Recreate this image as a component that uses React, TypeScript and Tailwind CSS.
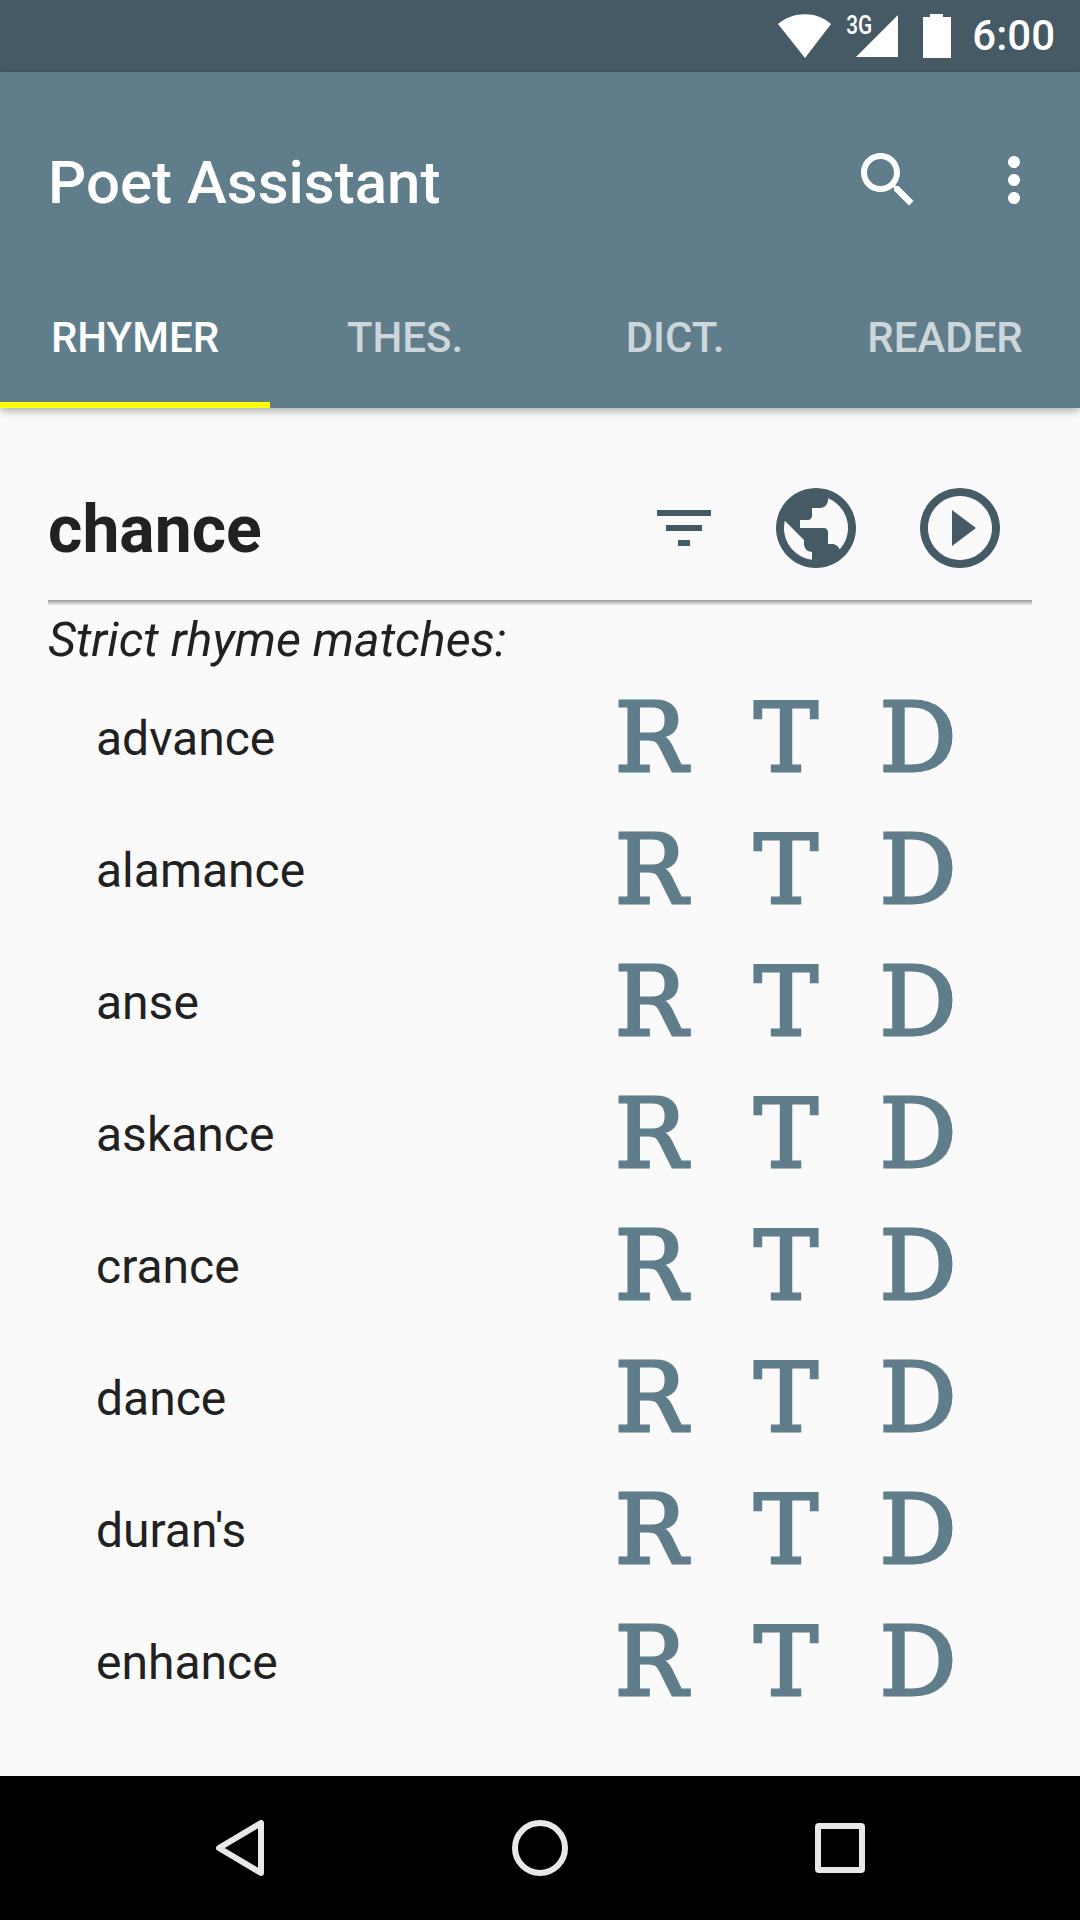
import React from 'react';

const WORDS = ['advance', 'alamance', 'anse', 'askance', 'crance', 'dance', "duran's", 'enhance'];
const TABS = ['RHYMER', 'THES.', 'DICT.', 'READER'];

const StatusBar: React.FC = () => (
  <div className="h-[72px] bg-[#455a64] flex items-center justify-end pr-[25px] text-white shrink-0">
    <svg width="54" height="44" viewBox="0 0 54 44" className="mt-[-1px]" fill="white">
      <path d="M27 44 L0 10 C15 -3 39 -3 53 10 Z" />
    </svg>
    <div className="relative w-[44px] h-[44px] ml-[23px] mt-[-1px]">
      <svg width="44" height="44" viewBox="0 0 44 44" fill="white" className="absolute right-0 top-0">
        <path d="M43 1 V43 H1 Z" />
      </svg>
      <span className="absolute left-[-12px] top-[-2px] text-[26px] leading-[26px] font-medium scale-x-[0.8]">3G</span>
    </div>
    <svg width="30" height="44" viewBox="0 0 30 44" fill="white" className="ml-[23px] mt-[-1px]">
      <path d="M8 0 H21 V3 H29 V44 H1 V3 H8 Z" />
    </svg>
    <span className="ml-[20px] text-[42px] leading-none font-medium">6:00</span>
  </div>
);

const Toolbar: React.FC = () => (
  <div className="bg-[#607d8b] shrink-0 shadow-[0_3px_8px_rgba(0,0,0,0.3)] relative z-10">
    <div className="h-[216px] flex items-center pl-[48px] pr-[30px]">
      <span className="flex-1 text-white text-[60px] font-medium leading-none pt-[6px]">Poet Assistant</span>
      <svg width="72" height="72" viewBox="0 0 24 24" fill="white" className="mr-[54px]">
        <path d="M15.5 14h-.79l-.28-.27C15.41 12.59 16 11.11 16 9.5 16 5.91 13.09 3 9.5 3S3 5.91 3 9.5 5.91 16 9.5 16c1.61 0 3.09-.59 4.23-1.57l.27.28v.79l5 4.99L20.49 19l-4.99-5zm-6 0C7.01 14 5 11.99 5 9.5S7.01 5 9.5 5 14 7.01 14 9.5 11.99 14 9.5 14z" />
      </svg>
      <svg width="72" height="72" viewBox="0 0 24 24" fill="white">
        <path d="M12 8c1.1 0 2-.9 2-2s-.9-2-2-2-2 .9-2 2 .9 2 2 2zm0 2c-1.1 0-2 .9-2 2s.9 2 2 2 2-.9 2-2-.9-2-2-2zm0 6c-1.1 0-2 .9-2 2s.9 2 2 2 2-.9 2-2-.9-2-2-2z" />
      </svg>
    </div>
    <div className="h-[120px] flex">
      {TABS.map((t, i) => (
        <div
          key={t}
          className={
            i === 0
              ? 'w-[270px] flex items-center justify-center text-white text-[42px] font-medium border-b-[6px] border-[#ffff00] pb-[16px]'
              : 'w-[270px] flex items-center justify-center text-white/70 text-[42px] font-medium border-b-[6px] border-transparent pb-[16px]'
          }
        >
          {t}
        </div>
      ))}
    </div>
  </div>
);

const WordRow: React.FC<{ word: string }> = ({ word }) => (
  <div className="h-[132px] flex items-center pl-[96px]">
    <span className="flex-1 text-[48px] text-[#212121] pt-[2px]">{word}</span>
    <div className="flex mr-[96px] text-[#607d8b] text-[96px] leading-none [font-family:'DejaVu_Serif',serif] [-webkit-text-stroke:3px_#607d8b]">
      <span className="w-[132px] text-center pr-[6px]">R</span>
      <span className="w-[132px] text-center">T</span>
      <span className="w-[132px] text-center">D</span>
    </div>
  </div>
);

const NavBar: React.FC = () => (
  <div className="h-[144px] bg-black flex items-center justify-center shrink-0 relative">
    <div className="flex items-center">
      <svg width="50" height="56" viewBox="0 0 50 56" fill="none" stroke="#e8e8e8" strokeWidth="6" strokeLinejoin="round">
        <path d="M46 3 V53 L4 28 Z" />
      </svg>
      <svg width="56" height="56" viewBox="0 0 56 56" fill="none" stroke="#e8e8e8" strokeWidth="6" className="ml-[247px]">
        <circle cx="28" cy="28" r="25" />
      </svg>
      <svg width="50" height="50" viewBox="0 0 50 50" fill="none" stroke="#e8e8e8" strokeWidth="6" strokeLinejoin="round" className="ml-[247px]">
        <rect x="3" y="3" width="44" height="44" rx="1" />
      </svg>
    </div>
  </div>
);

export default function App() {
  return (
    <div className="w-[1080px] h-[1920px] flex flex-col overflow-hidden bg-[#fafafa] [font-family:Roboto,sans-serif]">
      <StatusBar />
      <Toolbar />
      <div className="flex-1 flex flex-col">
        <div className="mx-[48px] mt-[72px] h-[120px] pb-[24px] flex items-center shrink-0">
          <span className="flex-1 text-[66px] font-bold text-[#212121] leading-none pt-[4px]">chance</span>
          <div className="flex items-center text-[#455a64]">
            <svg width="72" height="72" viewBox="0 0 24 24" fill="#455a64" className="mr-[48px]">
              <path d="M10 18h4v-2h-4v2zM3 6v2h18V6H3zm3 7h12v-2H6v2z" />
            </svg>
            <svg width="96" height="96" viewBox="0 0 24 24" fill="#455a64" className="mr-[48px]">
              <path d="M12 2C6.48 2 2 6.48 2 12s4.48 10 10 10 10-4.48 10-10S17.52 2 12 2zm-1 17.93c-3.95-.49-7-3.85-7-7.93 0-.62.08-1.21.21-1.79L9 15v1c0 1.1.9 2 2 2v1.93zm6.9-2.54c-.26-.81-1-1.39-1.9-1.39h-1v-3c0-.55-.45-1-1-1H8v-2h2c.55 0 1-.45 1-1V7h2c1.1 0 2-.9 2-2v-.41c2.93 1.19 5 4.06 5 7.41 0 2.08-.8 3.97-2.1 5.39z" />
            </svg>
            <svg width="96" height="96" viewBox="0 0 24 24" fill="#455a64" className="mr-[24px]">
              <path d="M10 16.5l6-4.5-6-4.5v9zM12 2C6.48 2 2 6.48 2 12s4.48 10 10 10 10-4.48 10-10S17.52 2 12 2zm0 18c-4.41 0-8-3.59-8-8s3.59-8 8-8 8 3.59 8 8-3.59 8-8 8z" />
            </svg>
          </div>
        </div>
        <div className="mx-[48px] h-[5px] bg-gradient-to-b from-[#999999] to-[#eeeeee] shrink-0" />
        <div className="pl-[48px] h-[67px] flex items-center text-[48.5px] italic text-[#212121] pt-[4px]">Strict rhyme matches:</div>
        {WORDS.map((w) => (
          <WordRow key={w} word={w} />
        ))}
      </div>
      <NavBar />
    </div>
  );
}
